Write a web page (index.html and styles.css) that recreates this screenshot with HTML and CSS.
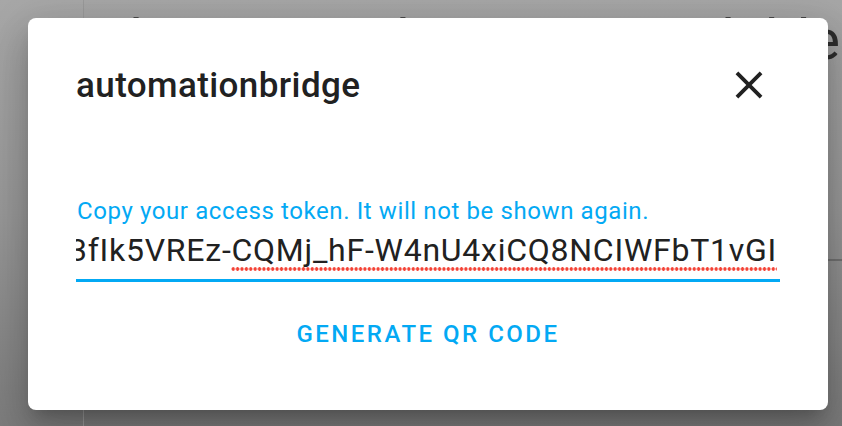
FILE: index.html
```html
<!DOCTYPE html>
<html lang="en">
<head>
<meta charset="utf-8">
<title>automationbridge</title>
<link rel="stylesheet" href="styles.css">
</head>
<body>
<div class="page">
  <aside class="sidebar"></aside>
  <main class="main">
    <div class="bg-head-row">
      <h1 class="bg-heading">Long-lived access tokens are available</h1>
    </div>
    <div class="bg-divider"></div>
  </main>
</div>
<div class="dialog" role="dialog">
  <header class="dialog-header">
    <h2 class="dialog-title">automationbridge</h2>
    <button class="close-btn" aria-label="Close">
      <svg viewBox="0 0 24 24" width="46" height="46"><path d="M19,6.41L17.59,5L12,10.59L6.41,5L5,6.41L10.59,12L5,17.59L6.41,19L12,13.41L17.59,19L19,17.59L13.41,12L19,6.41Z" fill="#212121"/></svg>
    </button>
  </header>
  <div class="field">
    <label class="field-label">Copy your access token. It will not be shown again.</label>
    <div class="field-input">
      <span class="token">eyJhbGciOiJIUzI1NiIsInR5cCI6IkpXVCJ9.eyJpc3MiOiI3fIk5VREz-<span class="misspelled">CQMj_hF-W4nU4xiCQ8NCIWFbT1vGI</span></span>
    </div>
  </div>
  <div class="actions">
    <button class="text-btn">Generate QR code</button>
  </div>
</div>
</body>
</html>
```

FILE: styles.css
```css
html, body {
  margin: 0;
  padding: 0;
  width: 842px;
  height: 426px;
  overflow: hidden;
  font-family: Roboto, "Noto Sans", sans-serif;
}

.page {
  display: flex;
  width: 842px;
  height: 426px;
  background: linear-gradient(180deg, #a7a7a7 0%, #989898 50%, #7b7b7b 100%);
}

.sidebar {
  width: 83px;
  flex: none;
  border-right: 1px solid #9a9a9a;
  background: linear-gradient(180deg, #a8a8a8 0%, #999999 50%, #7d7d7d 100%);
}

.main {
  flex: 1;
  padding-top: 8px;
  overflow: hidden;
  min-width: 0;
}

.bg-head-row {
  display: flex;
  justify-content: flex-end;
  margin-right: 2px;
}

.bg-heading {
  margin: 0;
  flex: none;
  font-size: 56px;
  font-weight: 400;
  color: #2e2e2e;
  white-space: nowrap;
  line-height: 64px;
}

.bg-divider {
  margin-top: 187px;
  height: 2px;
  background: #717171;
}

.dialog {
  position: absolute;
  left: 28px;
  top: 18px;
  width: 800px;
  height: 392px;
  box-sizing: border-box;
  background: #fff;
  border-radius: 8px;
  box-shadow: 0 11px 15px -7px rgba(0,0,0,.2), 0 24px 38px 3px rgba(0,0,0,.14), 0 9px 46px 8px rgba(0,0,0,.12);
  padding: 0 48px;
  display: flex;
  flex-direction: column;
}

.dialog-header {
  display: flex;
  align-items: center;
  justify-content: space-between;
  height: 138px;
}

.dialog-title {
  margin: -2px 0 0 0;
  font-size: 35px;
  font-weight: 500;
  letter-spacing: 0.4px;
  color: #212121;
  line-height: 40px;
}

.close-btn {
  border: 0;
  background: none;
  padding: 0;
  margin: -4px 8px 0 0;
  width: 46px;
  height: 46px;
  display: flex;
}

.field {
  display: flex;
  flex-direction: column;
  margin-top: 41px;
}

.field-label {
  font-size: 24px;
  letter-spacing: 0.6px;
  color: #03a9f4;
  line-height: 28px;
  padding-left: 1px;
}

.field-input {
  display: flex;
  justify-content: flex-end;
  align-items: flex-start;
  overflow: hidden;
  white-space: nowrap;
  border-bottom: 3px solid #03a9f4;
  box-sizing: border-box;
  height: 57px;
  padding: 6px 3px 0 0;
}

.token {
  font-size: 32px;
  letter-spacing: 0.75px;
  color: #212121;
  line-height: 38px;
  flex: none;
}

.misspelled {
  background-image: radial-gradient(circle, #f44336 1.5px, rgba(244,67,54,0) 2px);
  background-size: 4.4px 4px;
  background-repeat: repeat-x;
  background-position: 0 100%;
  padding-bottom: 2px;
}

.actions {
  display: flex;
  justify-content: center;
  margin-top: 30px;
}

.text-btn {
  border: 0;
  background: none;
  font-family: Roboto, "Noto Sans", sans-serif;
  font-size: 24px;
  font-weight: 500;
  letter-spacing: 2.5px;
  text-transform: uppercase;
  color: #03a9f4;
  padding: 8px 16px;
}
```
